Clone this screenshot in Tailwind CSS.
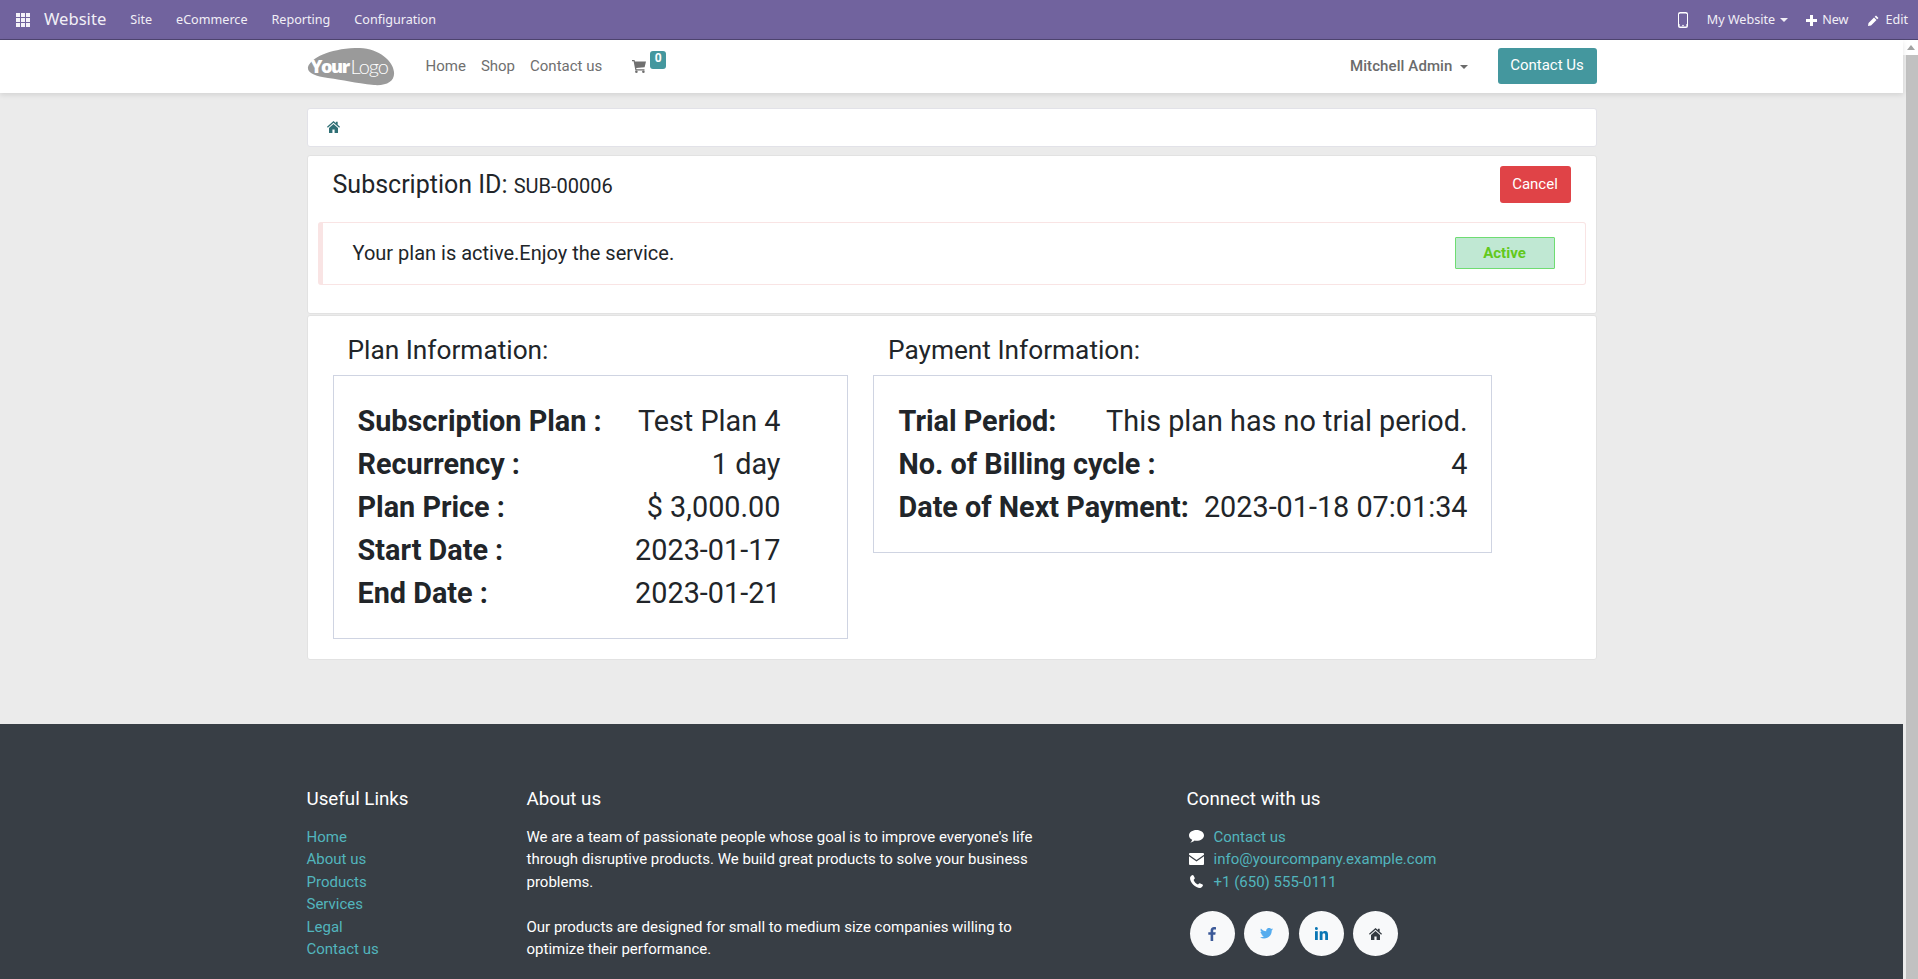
<!DOCTYPE html>
<html><head><meta charset="utf-8"><title>Subscription</title>
<script src="https://cdn.jsdelivr.net/npm/@tailwindcss/browser@4"></script></head>
<body class="font-['Roboto',sans-serif] text-[15px] text-[#212529] bg-[#ebebeb] overflow-hidden">
<div class="flex flex-col h-[979px] w-[1918px] overflow-hidden">
  <nav class="h-[40px] shrink-0 bg-[#71639e] border-b border-[#4f4570] flex items-center text-[#f1eff6] text-[12.6px] font-['Noto_Sans',sans-serif]">
    <svg class="ml-[16px] w-[14px] h-[14px]" viewBox="0 0 14 14" fill="#f4f2f8"><rect width="4" height="4"/><rect x="5" width="4" height="4"/><rect x="10" width="4" height="4"/><rect y="5" width="4" height="4"/><rect x="5" y="5" width="4" height="4"/><rect x="10" y="5" width="4" height="4"/><rect y="10" width="4" height="4"/><rect x="5" y="10" width="4" height="4"/><rect x="10" y="10" width="4" height="4"/></svg>
    <span class="ml-[14px] text-[16.6px]">Website</span>
    <div class="ml-[24px] flex gap-[24px] pt-[2px]"><span>Site</span><span>eCommerce</span><span>Reporting</span><span>Configuration</span></div>
    <div class="ml-auto flex items-center mr-[10px] pt-[2px]">
      <svg class="w-[10px] h-[16px]" viewBox="0 0 10 16"><rect x="0.8" y="0.8" width="8.4" height="14.4" rx="1.3" fill="none" stroke="#fff" stroke-width="1.6"/><rect x="1" y="2" width="8" height="10" fill="#71639e"/><circle cx="5" cy="13.6" r="0.8" fill="#fff"/></svg>
      <span class="ml-[19px]">My Website</span>
      <span class="ml-[5px] w-0 h-0 border-x-[4.5px] border-x-transparent border-t-[4.5px] border-t-[#f1eff6]"></span>
      <svg class="ml-[18px] w-[11px] h-[11px]" viewBox="0 0 11 11" fill="#fff"><path d="M4 0h3v4h4v3H7v4H4V7H0V4h4z"/></svg>
      <span class="ml-[5px]">New</span>
      <svg class="ml-[20px] w-[11px] h-[11px]" viewBox="0 0 11 11" fill="#fff"><path d="M8 0.5l2.500 2.500-1.300 1.300-2.500-2.500zM6 2.500L8.500 5 3 10.500 0 11l.5-3z"/></svg>
      <span class="ml-[6px]">Edit</span>
    </div>
  </nav>
  <div class="flex flex-1 min-h-0">
  <div class="w-[1903px] flex flex-col shrink-0">
  <header class="h-[53px] shrink-0 bg-white shadow-[0_2px_5px_rgba(0,0,0,0.1)] relative z-10 flex justify-center">
    <div class="w-[1290px] flex items-center text-[#6f6f6f]">
      <div class="relative w-[88px] h-[38px] shrink-0">
        <svg class="absolute inset-0" width="88" height="38" viewBox="0 0 88 38"><path d="M1 19C4 10 22 1 48 0c22-1 38 12 39 24 1 9-7 14-20 13-20-2-30-5-46-7C8 28 0 25 1 19z" fill="#9a9a9a"/></svg>
        <span class="absolute left-[4px] top-[8px] text-[18px] leading-[20px] font-black tracking-[-1.4px] text-white font-['Open_Sans',sans-serif]">Your</span>
        <span class="absolute left-[44px] top-[7px] text-[20px] leading-[22px] font-light tracking-[-1px] text-white font-['Lato',sans-serif]">Logo</span>
      </div>
      <span class="ml-[31px]">Home</span><span class="ml-[15px]">Shop</span><span class="ml-[15px]">Contact us</span>
      <div class="ml-[30px] relative w-[34px] h-[20px]">
        <svg class="absolute left-0 top-[3px] w-[14px] h-[13px]" viewBox="0 0 14 13" fill="#6f6f6f"><path d="M0 0h2.500l.5 1.600H14l-1.400 5.600-8.400.9.3 1.200H12.500v1.200H3.400L1.600 1.300H0z"/><circle cx="4.400" cy="11.700" r="1.300"/><circle cx="11.400" cy="11.700" r="1.300"/></svg>
        <span class="absolute left-[18px] top-[-6px] w-[16px] h-[18px] rounded-[3px] bg-[#44979e] text-white text-[12px] font-bold leading-[15px] text-center">0</span>
      </div>
      <span class="ml-auto font-medium text-[#6b6b6b] tracking-[0.1px]">Mitchell Admin</span>
      <span class="ml-[7px] w-0 h-0 border-x-[4.5px] border-x-transparent border-t-[4.5px] border-t-[#6b6b6b]"></span>
      <span class="ml-[30px] mb-[2px] w-[99px] h-[36px] rounded-[3px] bg-[#44979e] text-white flex items-center justify-center">Contact Us</span>
    </div>
  </header>
  <main class="flex-1 flex flex-col items-center min-h-0">
    <div class="w-[1290px] h-[39px] mt-[15px] shrink-0 bg-white rounded-[3px] border border-[#e2e2e8] flex items-center pl-[19px] pb-[2px]">
      <svg class="w-[13px] h-[12px]" viewBox="0 0 13 12" fill="#2f6f75"><path d="M6.500 0l2.400 2.100V.8h1.800v2.900L13 5.800l-.8.9L6.500 1.800.8 6.700 0 5.800z"/><path d="M6.500 3L2 6.900V12h3.400V8.500h2.200V12H11V6.900z"/></svg>
    </div>
    <section class="w-[1290px] h-[159px] mt-[8px] shrink-0 bg-white rounded-[3px] border border-[#e2e2e2] flex flex-col">
      <div class="flex items-start pl-[25px] pr-[25px] pt-[9px] h-[66px] shrink-0">
        <span class="text-[25px] leading-[38px] pt-[1px]">Subscription ID: <span class="text-[20px]">SUB-00006</span></span>
        <span class="ml-auto w-[71px] h-[37px] mt-[1px] rounded-[3px] bg-[#e04347] text-white flex items-center justify-center">Cancel</span>
      </div>
      <div class="mx-[10px] h-[63px] rounded-[3px] border border-[#f9e4e4] border-l-[5px] flex items-center pl-[30px] pr-[30px] text-[20px]">
        <span class="mb-[2px]">Your plan is active.Enjoy the service.</span>
        <span class="ml-auto mb-[1px] w-[100px] h-[32px] rounded-[1px] border border-[#6fdc72] bg-[#c0e8d3] text-[#62c91c] text-[15px] font-bold flex items-center justify-center">Active</span>
      </div>
    </section>
    <section class="w-[1290px] h-[345px] mt-[1px] shrink-0 bg-white rounded-[3px] border border-[#e2e2e2] flex items-start">
      <div class="ml-[25px] w-[515px] shrink-0">
        <h3 class="text-[26.25px] leading-[36px] mt-[16px] ml-[15px] h-[32px]">Plan Information:</h3>
        <div class="mt-[11px] h-[264px] border border-[#cfd4e2] px-[24px] pt-[23.500px] text-[28.8px] leading-[43px]">
          <div class="flex justify-between"><b>Subscription Plan :</b><span class="mr-[42px]">Test Plan 4</span></div>
          <div class="flex justify-between"><b>Recurrency :</b><span class="mr-[42px]">1 day</span></div>
          <div class="flex justify-between"><b>Plan Price :</b><span class="mr-[42px]">$ 3,000.00</span></div>
          <div class="flex justify-between"><b>Start Date :</b><span class="mr-[42px]">2023-01-17</span></div>
          <div class="flex justify-between"><b>End Date :</b><span class="mr-[42px]">2023-01-21</span></div>
        </div>
      </div>
      <div class="ml-[25px] w-[619px] shrink-0">
        <h3 class="text-[26.25px] leading-[36px] mt-[16px] ml-[15.500px] h-[32px]">Payment Information:</h3>
        <div class="mt-[11px] h-[178px] border border-[#cfd4e2] pl-[25px] pr-[23px] pt-[23.500px] text-[28.8px] leading-[43px]">
          <div class="flex justify-between"><b>Trial Period:</b><span>This plan has no trial period.</span></div>
          <div class="flex justify-between"><b>No. of Billing cycle :</b><span>4</span></div>
          <div class="flex justify-between"><b>Date of Next Payment:</b><span>2023-01-18 07:01:34</span></div>
        </div>
      </div>
    </section>
  </main>
  <footer class="h-[255px] shrink-0 bg-[#383e45] flex justify-center text-white overflow-hidden">
    <div class="w-[1290px] flex pt-[64px] leading-[22.5px]">
      <div class="w-[220px] shrink-0">
        <h5 class="text-[18.75px] leading-[22px] mb-[15.5px]">Useful Links</h5>
        <ul class="text-[#52b5bd]"><li>Home</li><li>About us</li><li>Products</li><li>Services</li><li>Legal</li><li>Contact us</li></ul>
      </div>
      <div class="w-[660px] shrink-0">
        <h5 class="text-[18.75px] leading-[22px] mb-[15.5px]">About us</h5>
        <p class="w-[520px]">We are a team of passionate people whose goal is to improve everyone's life through disruptive products. We build great products to solve your business problems.</p>
        <p class="w-[520px] mt-[22.5px]">Our products are designed for small to medium size companies willing to optimize their performance.</p>
      </div>
      <div>
        <h5 class="text-[18.75px] leading-[22px] mb-[15.5px]">Connect with us</h5>
        <ul class="text-[#52b5bd]">
          <li class="flex items-center"><svg class="ml-[2px] w-[15px] h-[13px]" viewBox="0 0 15 13" fill="#fff"><path d="M7.500 0C11.600 0 15 2.400 15 5.400s-3.400 5.400-7.500 5.400c-.7 0-1.300-.1-1.900-.2C4.500 11.500 3 12.500 1.300 12.800 2.300 11.800 3 10.800 3.200 9.700 1.200 8.700 0 7.100 0 5.400 0 2.400 3.400 0 7.500 0z"/></svg><span class="ml-[10px]">Contact us</span></li>
          <li class="flex items-center"><svg class="ml-[2px] w-[15px] h-[12px]" viewBox="0 0 15 12" fill="#fff"><path d="M1 0h13a1 1 0 0 1 1 1v.8L7.500 7 0 1.800V1a1 1 0 0 1 1-1z"/><path d="M0 3.300l7.500 5.100L15 3.300V11a1 1 0 0 1-1 1H1a1 1 0 0 1-1-1z"/></svg><span class="ml-[10px]">info@yourcompany.example.com</span></li>
          <li class="flex items-center"><svg class="ml-[3px] w-[13px] h-[13px]" viewBox="0 0 13 13" fill="#fff"><path d="M3 0c.4 0 1.800 2.800 1.800 3.300S3.600 4.600 3.600 5.100c.5 1.800 2.500 3.800 4.300 4.300.5 0 1.200-1.200 1.700-1.200S13 9.600 13 10c0 1.300-1.800 3-3 3C5.500 13 0 7.500 0 3c0-1.200 1.700-3 3-3z"/></svg><span class="ml-[11px]">+1 (650) 555-0111</span></li>
        </ul>
        <div class="flex gap-[9.67px] mt-[18px] ml-[3px]">
          <span class="w-[45px] h-[45px] rounded-full bg-[#f8f9fa] flex items-center justify-center"><svg class="w-[8px] h-[14px]" viewBox="0 0 8 14" fill="#3b5998"><path d="M5.200 14V7.800h2.100l.4-2.500H5.200V3.800c0-.7.300-1.200 1.300-1.200H8V.3C7.700.2 6.900 0 6 0 4 0 2.600 1.200 2.600 3.500v1.800H.3v2.500h2.300V14z"/></svg></span>
          <span class="w-[45px] h-[45px] rounded-full bg-[#f8f9fa] flex items-center justify-center"><svg class="w-[13px] h-[11px]" viewBox="0 0 13 11" fill="#55acee"><path d="M13 1.300c-.5.200-1 .4-1.500.4.600-.3 1-.8 1.200-1.500-.5.300-1.100.5-1.700.7A2.700 2.700 0 0 0 6.300 3.300C4.100 3.200 2.100 2.100.9.500.2 1.700.6 3.300 1.700 4c-.4 0-.8-.1-1.200-.3 0 1.300.9 2.400 2.100 2.600-.4.100-.8.100-1.200 0 .3 1.100 1.300 1.800 2.500 1.900-1.100.9-2.500 1.300-3.900 1.100C1.200 10.100 2.600 10.500 4.100 10.500c5 0 7.800-4.200 7.600-7.900.5-.4 1-.8 1.300-1.300z"/></svg></span>
          <span class="w-[45px] h-[45px] rounded-full bg-[#f8f9fa] flex items-center justify-center"><svg class="w-[13px] h-[13px]" viewBox="0 0 13 13" fill="#0976b4"><rect y="4.200" width="2.800" height="8.800"/><circle cx="1.400" cy="1.500" r="1.500"/><path d="M4.700 4.200h2.700v1.200c.4-.8 1.400-1.400 2.600-1.400 2.400 0 3 1.500 3 3.800V13h-2.800V8.300c0-1.100-.2-2-1.300-2-1.200 0-1.400.9-1.400 1.900V13H4.700z"/></svg></span>
          <span class="w-[45px] h-[45px] rounded-full bg-[#f8f9fa] flex items-center justify-center"><svg class="w-[13px] h-[12px]" viewBox="0 0 13 12" fill="#343a40"><path d="M6.500 0l2.400 2.100V.8h1.800v2.900L13 5.800l-.8.9L6.500 1.800.8 6.700 0 5.800z"/><path d="M6.500 3L2 6.900V12h3.400V8.500h2.200V12H11V6.900z"/></svg></span>
        </div>
      </div>
    </div>
  </footer>
  </div>
  <div class="w-[15px] shrink-0 bg-[#ebebeb] flex flex-col">
    <div class="h-[15px] bg-white flex justify-center pt-[5px] shrink-0"><span class="w-0 h-0 border-x-[4px] border-x-transparent border-b-[5px] border-b-[#a3a3a3]"></span></div>
    <div class="flex-1 bg-[#c1c1c1] ml-[3px]"></div>
  </div>
  </div>
</div>
</body></html>
